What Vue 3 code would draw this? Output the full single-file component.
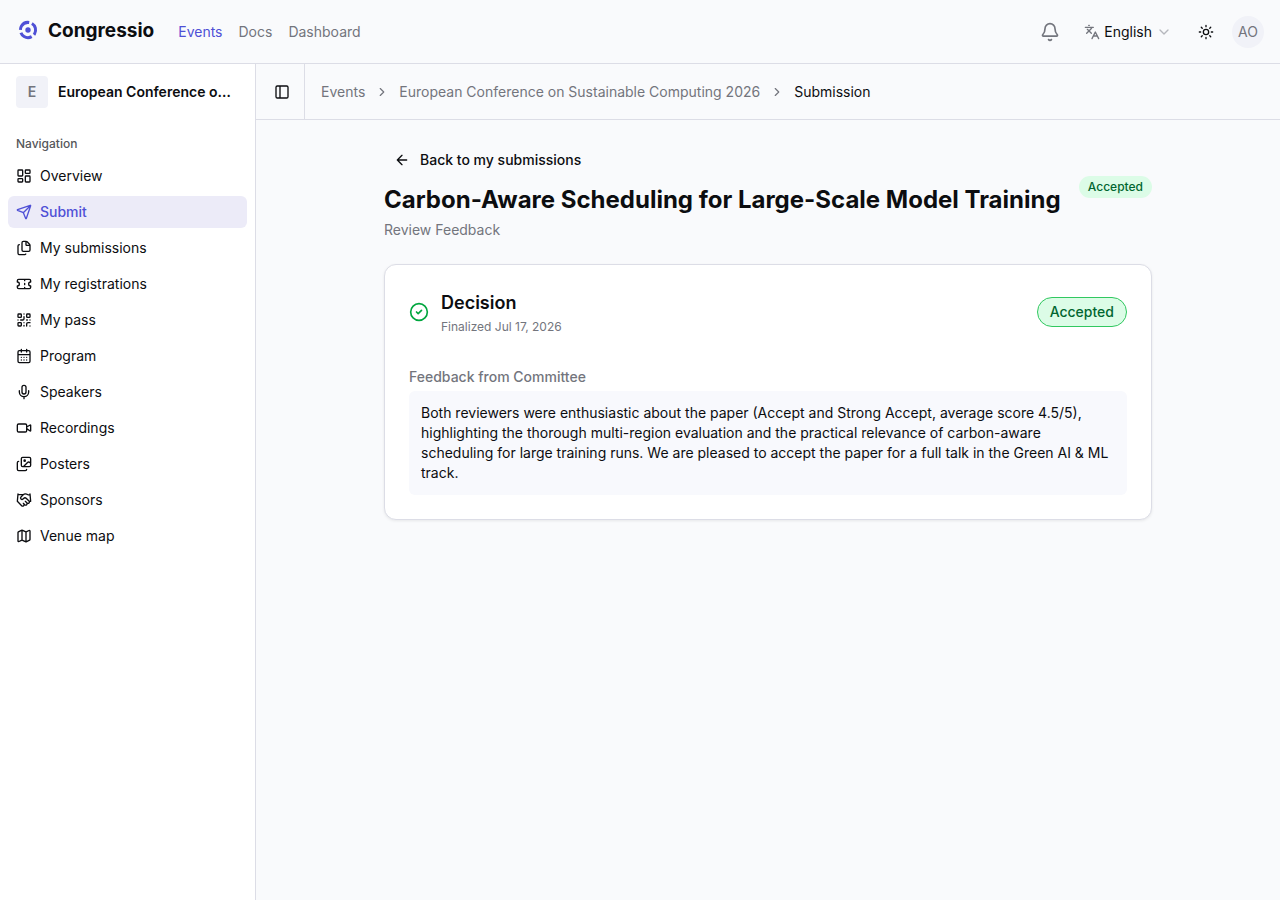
<template>
  <div class="app">
    <header class="topbar">
      <a href="#" class="brand">
        <svg class="logo" viewBox="0 0 24 24" fill="none">
          <circle cx="12" cy="12" r="7.6" pathLength="360" class="ring" />
          <circle cx="12" cy="12" r="2.7" fill="currentColor" />
        </svg>
        <span>Congressio</span>
      </a>
      <nav class="topnav">
        <a v-for="l in topLinks" :key="l" href="#" :class="{ active: l === 'Events' }">{{ l }}</a>
      </nav>
      <div class="actions">
        <button class="iconbtn bell" aria-label="Notifications">
          <svg class="icon lg" viewBox="0 0 24 24"><path :d="icons.bell" /></svg>
        </button>
        <button class="lang">
          <svg class="icon dim" viewBox="0 0 24 24"><path :d="icons.languages" /></svg>
          <span>English</span>
          <svg class="icon chev" viewBox="0 0 24 24"><path d="m6 9 6 6 6-6" /></svg>
        </button>
        <button class="iconbtn" aria-label="Theme">
          <svg class="icon" viewBox="0 0 24 24"><path :d="icons.sun" /></svg>
        </button>
        <button class="avatar">AO</button>
      </div>
    </header>

    <div class="body">
      <aside class="sidebar">
        <a href="#" class="event">
          <span class="badge-letter">E</span>
          <span class="event-name">{{ eventName }}</span>
        </a>
        <div class="group-label">Navigation</div>
        <nav class="menu">
          <a v-for="m in menu" :key="m.label" href="#" class="item" :class="{ active: m.label === 'Submit' }">
            <svg class="icon" viewBox="0 0 24 24"><path :d="icons[m.icon]" /></svg>
            <span>{{ m.label }}</span>
          </a>
        </nav>
      </aside>

      <div class="content">
        <div class="crumbbar">
          <div class="toggle">
            <button class="iconbtn small" aria-label="Toggle sidebar">
              <svg class="icon" viewBox="0 0 24 24"><path :d="icons.panel" /></svg>
            </button>
          </div>
          <nav class="crumbs">
            <a href="#">Events</a>
            <svg class="icon sm" viewBox="0 0 24 24"><path d="m9 18 6-6-6-6" /></svg>
            <a href="#">{{ eventName }}</a>
            <svg class="icon sm" viewBox="0 0 24 24"><path d="m9 18 6-6-6-6" /></svg>
            <span class="current">Submission</span>
          </nav>
        </div>

        <main class="page">
          <button class="back">
            <svg class="icon" viewBox="0 0 24 24"><path d="m12 19-7-7 7-7M19 12H5" /></svg>
            Back to my submissions
          </button>
          <div class="heading">
            <div>
              <h1>Carbon-Aware Scheduling for Large-Scale Model Training</h1>
              <p class="sub">Review Feedback</p>
            </div>
            <span class="pill">Accepted</span>
          </div>

          <section class="card">
            <div class="card-head">
              <svg class="icon lg ok" viewBox="0 0 24 24"><path :d="icons.check" /></svg>
              <div class="card-title">
                <h2>Decision</h2>
                <p>Finalized Jul 17, 2026</p>
              </div>
              <span class="pill outlined">Accepted</span>
            </div>
            <h3>Feedback from Committee</h3>
            <p class="feedback">{{ feedback }}</p>
          </section>
        </main>
      </div>
    </div>
  </div>
</template>

<script setup>
const eventName = "European Conference on Sustainable Computing 2026";
const topLinks = ["Events", "Docs", "Dashboard"];

const feedback =
  "Both reviewers were enthusiastic about the paper (Accept and Strong Accept, average score 4.5/5), highlighting the thorough multi-region evaluation and the practical relevance of carbon-aware scheduling for large training runs. We are pleased to accept the paper for a full talk in the Green AI & ML track.";

const menu = [
  { label: "Overview", icon: "dashboard" },
  { label: "Submit", icon: "send" },
  { label: "My submissions", icon: "files" },
  { label: "My registrations", icon: "ticket" },
  { label: "My pass", icon: "qr" },
  { label: "Program", icon: "calendar" },
  { label: "Speakers", icon: "mic" },
  { label: "Recordings", icon: "video" },
  { label: "Posters", icon: "images" },
  { label: "Sponsors", icon: "handshake" },
  { label: "Venue map", icon: "map" },
];

const icons = {
  dashboard:
    "M4 3h5a1 1 0 0 1 1 1v7a1 1 0 0 1-1 1H4a1 1 0 0 1-1-1V4a1 1 0 0 1 1-1ZM15 3h5a1 1 0 0 1 1 1v3a1 1 0 0 1-1 1h-5a1 1 0 0 1-1-1V4a1 1 0 0 1 1-1ZM15 12h5a1 1 0 0 1 1 1v7a1 1 0 0 1-1 1h-5a1 1 0 0 1-1-1v-7a1 1 0 0 1 1-1ZM4 16h5a1 1 0 0 1 1 1v3a1 1 0 0 1-1 1H4a1 1 0 0 1-1-1v-3a1 1 0 0 1 1-1Z",
  send:
    "M14.536 21.686a.5.5 0 0 0 .937-.024l6.5-19a.496.496 0 0 0-.635-.635l-19 6.5a.5.5 0 0 0-.024.937l7.93 3.18a2 2 0 0 1 1.112 1.11zM21.854 2.147l-10.94 10.939",
  files:
    "M15 2h-4a2 2 0 0 0-2 2v11a2 2 0 0 0 2 2h8a2 2 0 0 0 2-2V8M16.706 2.706A2.4 2.4 0 0 0 15 2v5a1 1 0 0 0 1 1h5a2.4 2.4 0 0 0-.706-1.706zM5 7a2 2 0 0 0-2 2v11a2 2 0 0 0 2 2h8a2 2 0 0 0 1.732-1",
  ticket:
    "M2 9a3 3 0 0 1 0 6v2a2 2 0 0 0 2 2h16a2 2 0 0 0 2-2v-2a3 3 0 0 1 0-6V7a2 2 0 0 0-2-2H4a2 2 0 0 0-2 2ZM13 5v2M13 17v2M13 11v2",
  qr:
    "M4 3h3a1 1 0 0 1 1 1v3a1 1 0 0 1-1 1H4a1 1 0 0 1-1-1V4a1 1 0 0 1 1-1ZM17 3h3a1 1 0 0 1 1 1v3a1 1 0 0 1-1 1h-3a1 1 0 0 1-1-1V4a1 1 0 0 1 1-1ZM4 16h3a1 1 0 0 1 1 1v3a1 1 0 0 1-1 1H4a1 1 0 0 1-1-1v-3a1 1 0 0 1 1-1ZM21 16h-3a2 2 0 0 0-2 2v3M21 21v.01M12 7v3a2 2 0 0 1-2 2H7M3 12h.01M12 3h.01M12 16v.01M16 12h1M21 12v.01M12 21v-1",
  calendar:
    "M8 2v4M16 2v4M5 4h14a2 2 0 0 1 2 2v14a2 2 0 0 1-2 2H5a2 2 0 0 1-2-2V6a2 2 0 0 1 2-2ZM3 10h18M8 14h.01M12 14h.01M16 14h.01M8 18h.01M12 18h.01M16 18h.01",
  mic: "M12 19v3M19 10v2a7 7 0 0 1-14 0v-2M12 2a3 3 0 0 1 3 3v7a3 3 0 0 1-6 0V5a3 3 0 0 1 3-3Z",
  video:
    "m16 13 5.223 3.482a.5.5 0 0 0 .777-.416V7.87a.5.5 0 0 0-.752-.432L16 10.5M4 6h10a2 2 0 0 1 2 2v8a2 2 0 0 1-2 2H4a2 2 0 0 1-2-2V8a2 2 0 0 1 2-2Z",
  images:
    "m22 11-1.296-1.296a2.4 2.4 0 0 0-3.408 0L11 16M4 8a2 2 0 0 0-2 2v10a2 2 0 0 0 2 2h10a2 2 0 0 0 2-2M12 7a1 1 0 1 0 2 0 1 1 0 1 0-2 0M10 2h10a2 2 0 0 1 2 2v10a2 2 0 0 1-2 2H10a2 2 0 0 1-2-2V4a2 2 0 0 1 2-2Z",
  handshake:
    "m11 17 2 2a1 1 0 1 0 3-3M14 14l2.5 2.5a1 1 0 1 0 3-3l-3.88-3.88a3 3 0 0 0-4.24 0l-.88.88a1 1 0 1 1-3-3l2.81-2.81a5.79 5.79 0 0 1 7.06-.87l.47.28a2 2 0 0 0 1.42.25L21 4M21 3l1 11h-2M3 3 2 14l6.5 6.5a1 1 0 1 0 3-3M3 4h8",
  map:
    "M14.106 5.553a2 2 0 0 0 1.788 0l3.659-1.83A1 1 0 0 1 21 4.619v12.764a1 1 0 0 1-.553.894l-4.553 2.277a2 2 0 0 1-1.788 0l-4.212-2.106a2 2 0 0 0-1.788 0l-3.659 1.83A1 1 0 0 1 3 19.381V6.618a1 1 0 0 1 .553-.894l4.553-2.277a2 2 0 0 1 1.788 0zM15 5.764v15M9 3.236v15",
  panel: "M5 3h14a2 2 0 0 1 2 2v14a2 2 0 0 1-2 2H5a2 2 0 0 1-2-2V5a2 2 0 0 1 2-2ZM9 3v18",
  bell:
    "M10.268 21a2 2 0 0 0 3.464 0M3.262 15.326A1 1 0 0 0 4 17h16a1 1 0 0 0 .74-1.673C19.41 13.956 18 12.499 18 8A6 6 0 0 0 6 8c0 4.499-1.411 5.956-2.738 7.326",
  languages: "m5 8 6 6M4 14l6-6 2-3M2 5h12M7 2h1M22 22l-5-10-5 10M14 18h6",
  sun:
    "M8 12a4 4 0 1 0 8 0 4 4 0 1 0-8 0M12 2v2M12 20v2M4.93 4.93l1.41 1.41M17.66 17.66l1.41 1.41M2 12h2M20 12h2M6.34 17.66l-1.41 1.41M19.07 4.93l-1.41 1.41",
  check: "M2 12a10 10 0 1 0 20 0 10 10 0 1 0-20 0M9 12l2 2 4-4",
};
</script>

<style>
body {
  margin: 0;
  background: #f9fafc;
}
</style>

<style scoped>
.app {
  min-height: 100vh;
  display: flex;
  flex-direction: column;
  font-family: Inter, "Liberation Sans", sans-serif;
  font-size: 14px;
  line-height: 20px;
  color: #0c0d10;
}
.app * {
  box-sizing: border-box;
}
a {
  color: inherit;
  text-decoration: none;
}
button {
  font: inherit;
  color: inherit;
  background: none;
  border: 0;
  padding: 0;
  cursor: pointer;
}
h1,
h2,
h3,
p {
  margin: 0;
}
.icon {
  width: 16px;
  height: 16px;
  flex-shrink: 0;
  fill: none;
  stroke: currentColor;
  stroke-width: 2;
  stroke-linecap: round;
  stroke-linejoin: round;
}
.icon.lg {
  width: 20px;
  height: 20px;
}
.icon.sm {
  width: 14px;
  height: 14px;
}
.topbar {
  height: 64px;
  display: flex;
  align-items: center;
  padding: 0 16px;
  border-bottom: 1px solid #dcdde6;
}
.brand {
  display: flex;
  align-items: flex-start;
  gap: 8px;
  margin-right: 24px;
  padding-bottom: 2px;
  font-size: 19px;
  line-height: 26px;
  font-weight: 700;
}
.logo {
  width: 24px;
  height: 24px;
  color: #4f50d6;
}
.ring {
  stroke: currentColor;
  stroke-width: 3;
  stroke-dasharray: 98 22;
  transform: rotate(-59deg);
  transform-origin: center;
}
.topnav {
  display: flex;
  gap: 16px;
  color: #73757d;
}
.topnav .active {
  color: #4f50d6;
}
.actions {
  margin-left: auto;
  display: flex;
  align-items: center;
  gap: 8px;
}
.iconbtn {
  width: 36px;
  height: 36px;
  display: flex;
  align-items: center;
  justify-content: center;
}
.iconbtn.small {
  width: 28px;
  height: 28px;
}
.bell,
.dim {
  color: #73757d;
}
.lang {
  height: 36px;
  display: flex;
  align-items: center;
  gap: 4px;
  padding: 0 8px;
}
.chev {
  color: #b5b7bd;
}
.avatar {
  width: 32px;
  height: 32px;
  border-radius: 50%;
  background: #f1f2f8;
  color: #73757d;
}
.body {
  flex: 1;
  display: flex;
}
.sidebar {
  width: 256px;
  flex-shrink: 0;
  background: #fff;
  border-right: 1px solid #dcdde6;
}
.event {
  display: flex;
  align-items: center;
  gap: 10px;
  padding: 12px 16px;
  font-weight: 600;
}
.badge-letter {
  width: 32px;
  height: 32px;
  flex-shrink: 0;
  border-radius: 4px;
  background: #f1f2f8;
  color: #73757d;
  text-align: center;
  line-height: 32px;
}
.event-name {
  overflow: hidden;
  text-overflow: ellipsis;
  white-space: nowrap;
}
.group-label {
  height: 32px;
  margin-top: 8px;
  padding: 0 16px;
  font-size: 12px;
  line-height: 32px;
  font-weight: 500;
  color: #55565a;
}
.menu {
  display: flex;
  flex-direction: column;
  gap: 4px;
  padding: 0 8px;
}
.item {
  height: 32px;
  display: flex;
  align-items: center;
  gap: 8px;
  padding: 0 8px;
  border-radius: 6px;
}
.item.active {
  background: #ecebf8;
  color: #4f50d6;
  font-weight: 500;
}
.content {
  flex: 1;
  min-width: 0;
}
.crumbbar {
  height: 56px;
  display: flex;
  border-bottom: 1px solid #dcdde6;
}
.toggle {
  display: flex;
  align-items: center;
  padding: 0 8px 0 12px;
  border-right: 1px solid #dcdde6;
}
.crumbs {
  display: flex;
  align-items: center;
  gap: 10px;
  padding: 0 16px;
  color: #73757d;
}
.current {
  color: #0c0d10;
}
.page {
  max-width: 768px;
  margin: 0 auto;
  padding: 24px 0;
}
.back {
  height: 32px;
  display: flex;
  align-items: center;
  gap: 10px;
  padding: 0 10px;
  font-weight: 500;
}
.heading {
  display: flex;
  justify-content: space-between;
  align-items: flex-start;
  gap: 16px;
}
h1 {
  margin-top: 8px;
  font-size: 24px;
  line-height: 32px;
  font-weight: 700;
}
.sub {
  margin-top: 4px;
  color: #73757d;
}
.pill {
  padding: 3px 9px;
  border-radius: 999px;
  background: #dcfce7;
  color: #016630;
  font-size: 12px;
  line-height: 16px;
  font-weight: 500;
}
.pill.outlined {
  margin-left: auto;
  padding: 4px 12px;
  border: 1px solid #31c860;
  font-size: 14px;
  line-height: 20px;
}
.card {
  margin-top: 24px;
  padding: 24px;
  background: #fff;
  border: 1px solid #dcdde6;
  border-radius: 12px;
  box-shadow: 0 1px 3px rgba(0, 0, 0, 0.08);
}
.card-head {
  display: flex;
  align-items: center;
  gap: 12px;
}
.ok {
  color: #00a63e;
}
h2 {
  font-size: 18px;
  line-height: 28px;
  font-weight: 600;
}
.card-title p {
  margin-top: 2px;
  font-size: 12px;
  line-height: 16px;
  color: #73757d;
}
h3 {
  margin: 32px 0 4px;
  font-size: 14px;
  font-weight: 500;
  color: #73757d;
}
.feedback {
  padding: 12px;
  border-radius: 6px;
  background: #f8f9fd;
}
</style>
